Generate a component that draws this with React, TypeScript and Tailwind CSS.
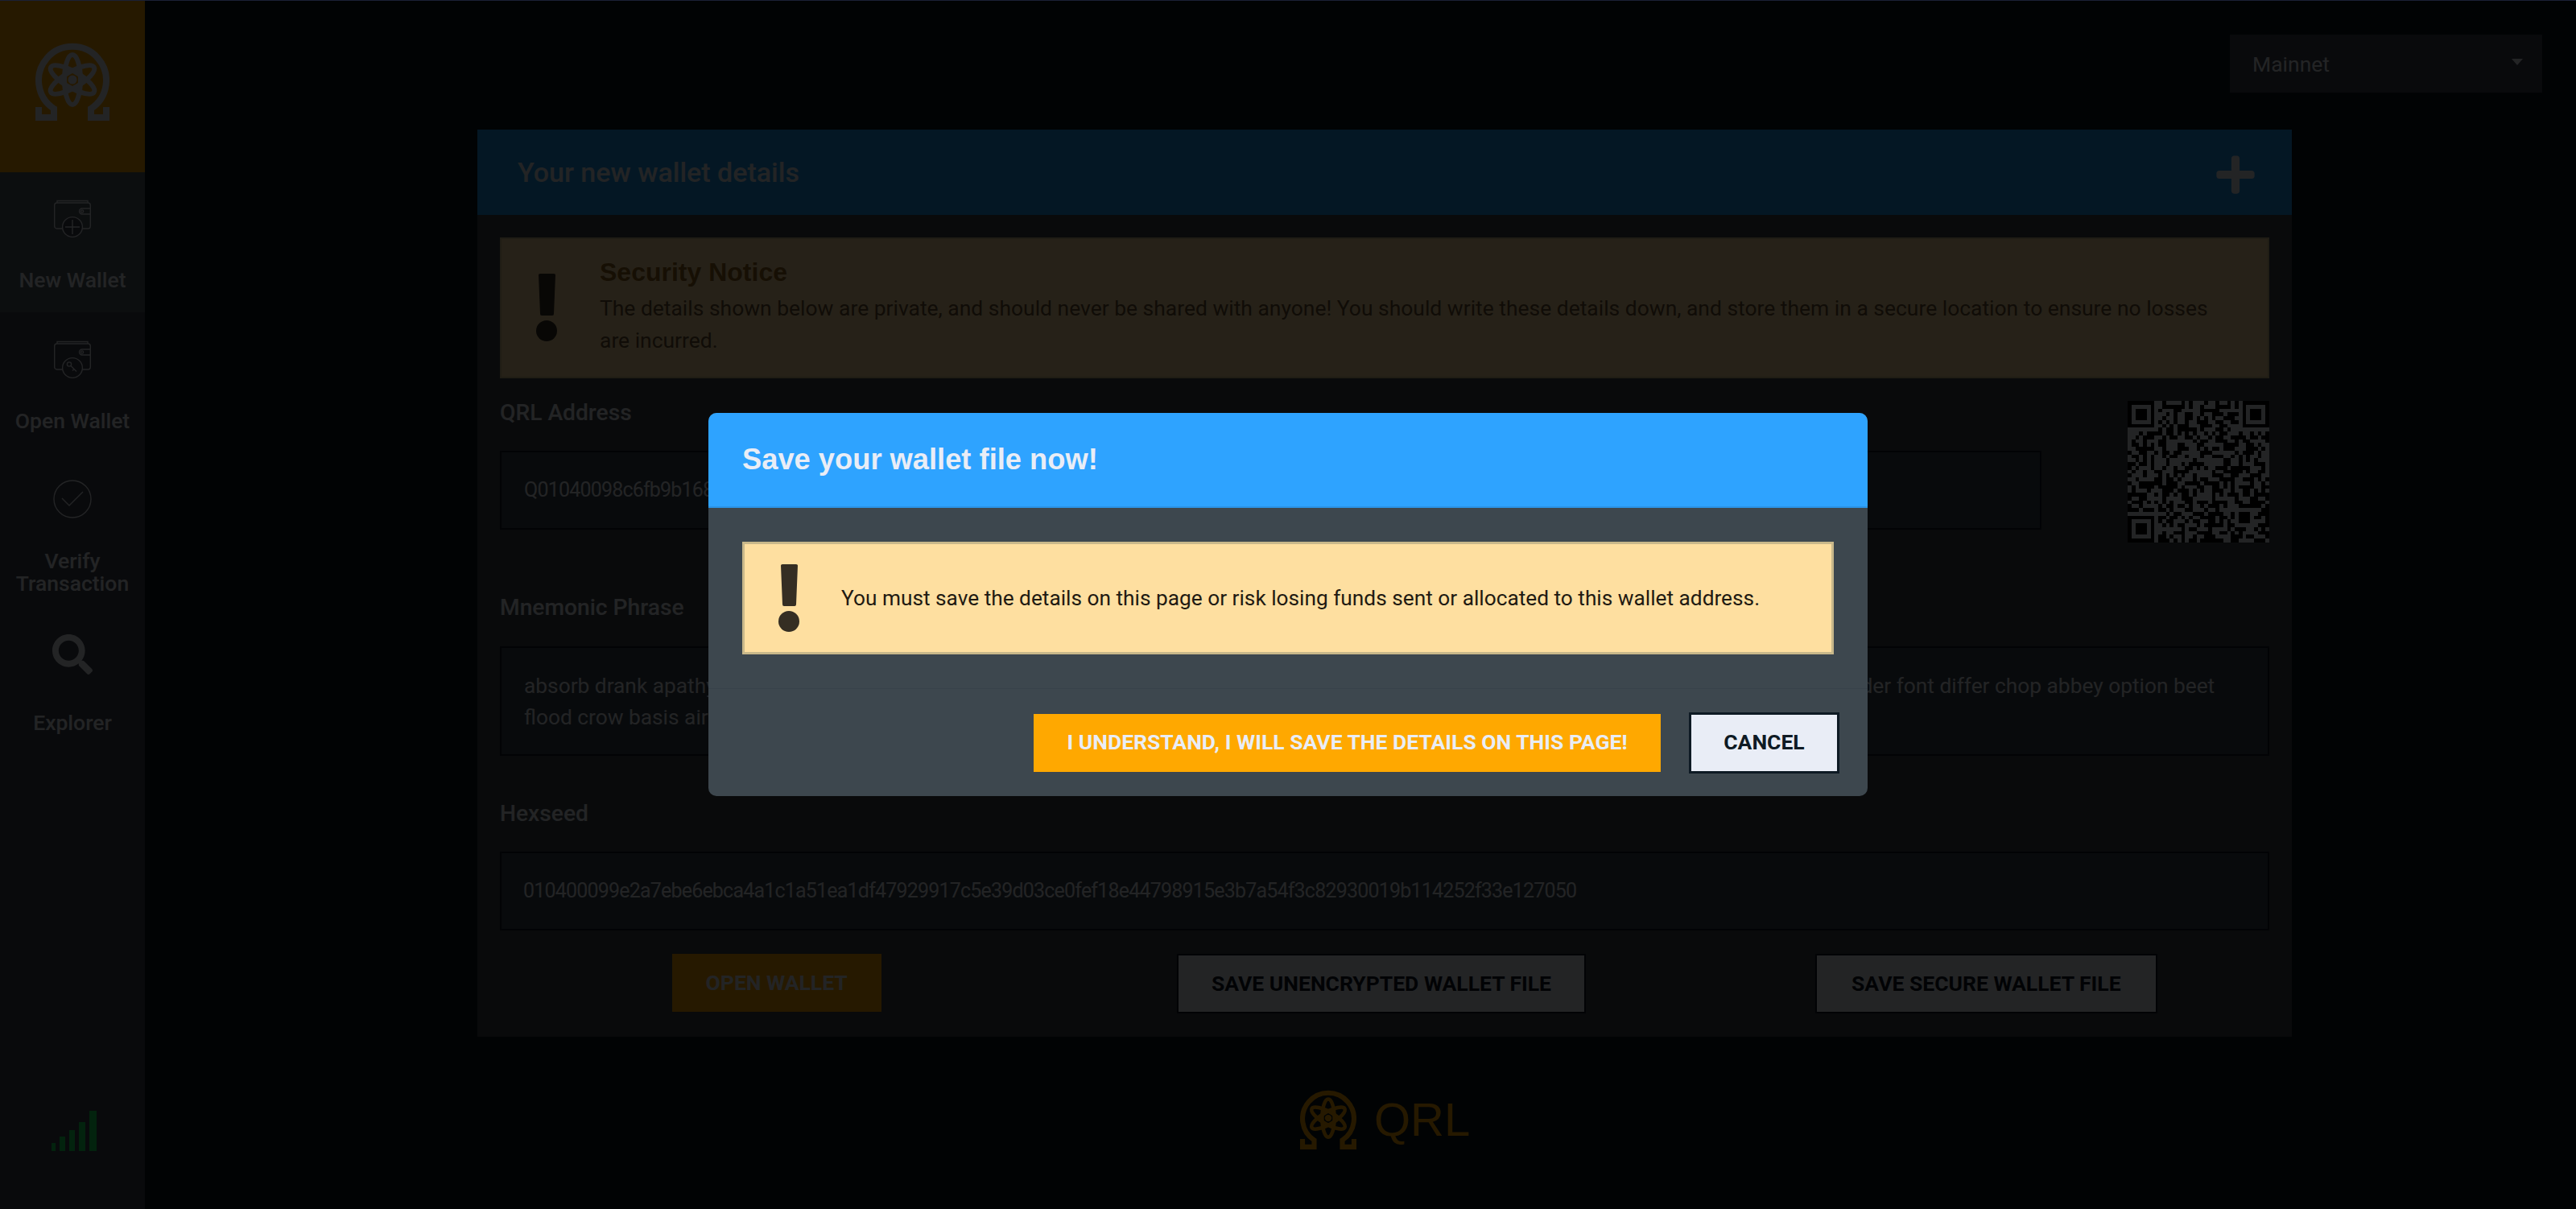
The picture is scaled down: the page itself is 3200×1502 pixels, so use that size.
import React from "react";
import { FaPlus, FaSearch } from "react-icons/fa";

const LogoMark = ({ className }: { className?: string }) => (
  <svg viewBox="0 0 92 97" fill="none" stroke="currentColor" className={className}>
    <path d="M4 80V93H23V82A42 42 0 1 1 69 82V93H88V80" strokeWidth="8" />
    <g strokeWidth="6">
      <ellipse cx="46" cy="46" rx="10" ry="31" />
      <ellipse cx="46" cy="46" rx="10" ry="31" transform="rotate(60 46 46)" />
      <ellipse cx="46" cy="46" rx="10" ry="31" transform="rotate(-60 46 46)" />
    </g>
    <circle cx="46" cy="46" r="5.5" fill="currentColor" stroke="none" />
  </svg>
);

const WalletIcon = ({ children }: { children: React.ReactNode }) => (
  <svg viewBox="0 0 46 47" width="46" height="47" fill="none" stroke="currentColor" strokeWidth="1.4">
    <path d="M4 4V1.5H42V4" />
    <rect x="0.7" y="4" width="44.6" height="32" rx="3" />
    <path d="M45 11H35a3.5 3.5 0 0 0 0 7H45" />
    <circle cx="35" cy="14.5" r="1.6" />
    <circle cx="23" cy="34" r="12.4" fill="#3c4350" />
    {children}
  </svg>
);

const CheckIcon = () => (
  <svg viewBox="0 0 48 48" width="48" height="48" fill="none" stroke="currentColor" strokeWidth="1.4">
    <circle cx="24" cy="24" r="23" />
    <path d="M11 23L20 32L37 15" />
  </svg>
);

const Exclamation = ({ className }: { className: string }) => (
  <svg viewBox="0 0 26 84" width="26" height="84" fill="currentColor" className={className}>
    <path d="M3 1.5Q3 0 5 0H22Q24 0 24 1.5L22 50Q22 52 20 52H7Q5 52 5 50Z" />
    <ellipse cx="13" cy="71" rx="13" ry="13" />
  </svg>
);

// not a real code, the modules are only meant to look like the picture
const QrCode = () => {
  const size = 37;
  let seed = 20771;
  const cells: string[] = [];
  const ring = (x: number, y: number, n: number) =>
    `M${x} ${y}h${n}v${n}h-${n}zM${x + 1} ${y + 1}v${n - 2}h${n - 2}v-${n - 2}z`;
  for (let y = 0; y < size; y++) {
    for (let x = 0; x < size; x++) {
      seed = (seed * 1103515 + 12345) & 0x7fffffff;
      const inFinder = (x < 8 && y < 8) || (x > 28 && y < 8) || (x < 8 && y > 28);
      const inAlign = x > 27 && x < 33 && y > 27 && y < 33;
      if (!inFinder && !inAlign && (seed >> 12) % 100 < 52) cells.push(`M${x} ${y}h1v1h-1z`);
    }
  }
  const separators = "M7 0h1v8h-8v-1h7zM29 0h1v7h7v1h-8zM0 29h8v8h-1v-7h-7z";
  return (
    <svg viewBox="0 0 37 37" width="176" height="176" className="shrink-0 bg-black text-[#e9edf6]" shapeRendering="crispEdges">
      <path d={cells.join("") + separators} fill="currentColor" />
      <path d={ring(1, 1, 5) + ring(31, 1, 5) + ring(1, 31, 5) + ring(28, 28, 5)} fill="currentColor" fillRule="evenodd" />
    </svg>
  );
};

const navItems = [
  { key: "new", label: ["New Wallet"], height: "h-[174px]", pad: "pt-[34px]", gap: "mt-[39px]", active: true },
  { key: "open", label: ["Open Wallet"], height: "h-[173px]", pad: "pt-[35px]", gap: "mt-[39px]", active: false },
  { key: "verify", label: ["Verify", "Transaction"], height: "h-[201px]", pad: "pt-[35px]", gap: "mt-[39px]", active: false },
  { key: "explorer", label: ["Explorer"], height: "h-[175px]", pad: "pt-[26px]", gap: "mt-[46px]", active: false },
];

const navIcon = (key: string) => {
  if (key === "new")
    return (
      <WalletIcon>
        <path d="M23 25V43M14 34H32" />
      </WalletIcon>
    );
  if (key === "open")
    return (
      <WalletIcon>
        <circle cx="19" cy="29.5" r="2.6" />
        <path d="M21 31.5L28 38.5M25 35.5L23 37.5" />
      </WalletIcon>
    );
  if (key === "verify") return <CheckIcon />;
  return <FaSearch className="text-[50px]" />;
};

const Sidebar = () => (
  <aside className="relative flex w-[180px] shrink-0 flex-col bg-[#3c4350] text-[#e9edf6]">
    <div className="flex h-[213px] justify-center bg-[#ffa800] pt-[52px] text-[#e9edf6]">
      <LogoMark className="h-[97px] w-[92px]" />
    </div>
    {navItems.map((item) => (
      <div
        key={item.key}
        className={`flex flex-col items-center ${item.height} ${item.pad} ${item.active ? "bg-[#4f5c64]" : ""}`}
      >
        {navIcon(item.key)}
        <div className={`${item.gap} text-center text-[26.5px] leading-[28px] font-medium`}>
          {item.label.map((line) => (
            <div key={line}>{line}</div>
          ))}
        </div>
      </div>
    ))}
    <div className="mt-auto mb-[72px] flex h-[50px] items-end gap-[5px] pl-[64px] text-[#18e860]">
      <span className="h-[10px] w-[5px] bg-current" />
      <span className="h-[18px] w-[7px] bg-current" />
      <span className="h-[26px] w-[7px] bg-current" />
      <span className="h-[36px] w-[8px] bg-current" />
      <span className="h-[50px] w-[9px] bg-current" />
    </div>
  </aside>
);

const Field = ({ children, className }: { children: React.ReactNode; className?: string }) => (
  <div className={`border-2 border-[#0e1a24] bg-[#354350] text-[#e9edf6] ${className ?? ""}`}>{children}</div>
);

const FieldLabel = ({ children, className }: { children: React.ReactNode; className?: string }) => (
  <div className={`text-[28.2px] leading-[32px] font-medium text-[#e9edf6] ${className ?? ""}`}>{children}</div>
);

const WalletDetails = () => (
  <section className="mt-[46px] ml-[413px] w-[2254px] bg-[#3d474e]">
    <header className="flex h-[106px] items-center justify-between bg-[#1e9df0] pr-[43px] pl-[50px] text-[#e9edf6]">
      <h2 className="text-[34px] font-medium">Your new wallet details</h2>
      <FaPlus className="mt-[6px] text-[54px]" />
    </header>
    <div className="px-[28px] pt-[28px] pb-[29px]">
      <div className="flex h-[175px] border-2 border-[#d8bf90] bg-[#fedfa0]">
        <Exclamation className="mt-[43px] ml-[43px] shrink-0 text-[#352e23]" />
        <div className="ml-[53px] pt-[23px]">
          <h3 className="font-['Liberation_Sans',sans-serif] text-[32px] leading-[36px] font-bold text-[#94681c]">
            Security Notice
          </h3>
          <p className="mt-[7px] text-[26.45px] leading-[40px] text-[#6b5432]">
            The details shown below are private, and should never be shared with anyone! You should write these details
            down, and store them in a secure location to ensure no losses
            <br />
            are incurred.
          </p>
        </div>
      </div>

      <div className="mt-[28px] flex justify-between">
        <div className="w-[1915px]">
          <FieldLabel className="mt-[-1px]">QRL Address</FieldLabel>
          <Field className="mt-[31px] flex h-[98px] items-center pl-[28px] text-[25px] tracking-[-0.8px]">
            Q01040098c6fb9b1680f2ad4e7c91b3a65d0e84f7219cb6d03ae1f5487c2b96de30a1c7f4e82
          </Field>
        </div>
        <QrCode />
      </div>

      <FieldLabel className="mt-[65px]">Mnemonic Phrase</FieldLabel>
      <Field className="mt-[32px] h-[136px] pt-[28px] pl-[28px] text-[26.3px] leading-[39px]">
        absorb drank apathy gentle marble cousin ribbon walnut shiver planet meadow copper linger orbit fabric lantern
        velvet anchors tiger silver thunder font differ chop abbey option beet
        <br />
        flood crow basis air
      </Field>

      <FieldLabel className="mt-[56px]">Hexseed</FieldLabel>
      <Field className="mt-[31px] flex h-[98px] items-center pl-[27px] text-[25px] tracking-[-0.8px]">
        010400099e2a7ebe6ebca4a1c1a51ea1df47929917c5e39d03ce0fef18e44798915e3b7a54f3c82930019b114252f33e127050
      </Field>

      <div className="mt-[29px] -mr-[24px] -ml-[32px] grid grid-cols-3 items-start">
        <button className="mx-auto flex h-[72px] w-[260px] items-center justify-center bg-[#ffa800] text-[26.5px] font-bold text-[#e9edf6]">
          OPEN WALLET
        </button>
        <button className="mx-auto flex h-[74px] w-[508px] items-center justify-center border-2 border-[#0e1a24] bg-[#e9edf6] text-[26.5px] font-bold text-[#0e1a24]">
          SAVE UNENCRYPTED WALLET FILE
        </button>
        <button className="mx-auto flex h-[74px] w-[425px] items-center justify-center border-2 border-[#0e1a24] bg-[#e9edf6] text-[26.5px] font-bold text-[#0e1a24]">
          SAVE SECURE WALLET FILE
        </button>
      </div>
    </div>
  </section>
);

const SaveModal = () => (
  <div className="absolute inset-x-0 top-0 bottom-0 z-10 flex items-center justify-center bg-black/85 pb-px">
    <div className="w-[1440px] overflow-hidden rounded-[10px] bg-[#3d474e]">
      <header className="flex h-[118px] items-center border-b-2 border-[#2b93e6] bg-[#2ea3ff] pl-[42px]">
        <h2 className="font-['Liberation_Sans',sans-serif] text-[36.3px] font-bold text-[#e9edf6]">
          Save your wallet file now!
        </h2>
      </header>
      <div className="h-[225px] border-b border-[#38424a] px-[42px] pt-[42px]">
        <div className="flex h-[140px] items-center border-[3px] border-[#c9b88a] bg-[#fedfa0]">
          <Exclamation className="ml-[42px] shrink-0 text-[#352e23]" />
          <p className="ml-[52px] pt-[2px] text-[26.25px] text-[#1f1a12]">
            You must save the details on this page or risk losing funds sent or allocated to this wallet address.
          </p>
        </div>
      </div>
      <footer className="flex h-[133px] items-start justify-end gap-[35px] pt-[29px] pr-[35px]">
        <button className="mt-[2px] flex h-[72px] w-[779px] items-center justify-center bg-[#ffa800] pb-[3px] text-[26.5px] font-bold text-[#e9edf6]">
          I UNDERSTAND, I WILL SAVE THE DETAILS ON THIS PAGE!
        </button>
        <button className="flex h-[76px] w-[187px] items-center justify-center border-[3px] border-[#0e1a24] bg-[#e9edf6] pb-[3px] text-[26.5px] font-bold text-[#0e1a24]">
          CANCEL
        </button>
      </footer>
    </div>
  </div>
);

export default function App() {
  return (
    <div className="relative flex h-[1502px] overflow-hidden border-t border-[#1b2036] bg-[#0a1420] font-['Roboto',sans-serif]">
      <Sidebar />
      <main className="flex-1">
        <div className="flex justify-end pt-[42px] pr-[42px]">
          <div className="flex h-[72px] w-[388px] items-center justify-between bg-[#3c4350] pt-[2px] pr-[24px] pl-[28px] text-[26.5px] text-[#e9edf6]">
            Mainnet
            <span className="mb-[6px] border-x-[7px] border-t-[8px] border-x-transparent border-t-[#e9edf6]" />
          </div>
        </div>
        <WalletDetails />
        <div className="mt-[66px] ml-[1435px] flex w-[210px] items-center gap-[22px] text-[#ffa800]">
          <LogoMark className="h-[74px] w-[70px] shrink-0" />
          <span className="font-['Liberation_Sans',sans-serif] text-[58px] leading-none">QRL</span>
        </div>
      </main>
      <SaveModal />
    </div>
  );
}
